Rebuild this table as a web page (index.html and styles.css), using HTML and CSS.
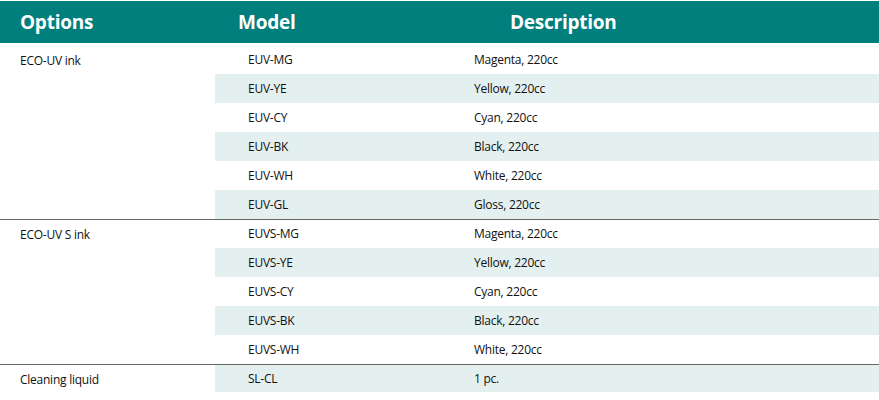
FILE: index.html
```html
<!DOCTYPE html>
<html lang="en">
<head>
<meta charset="utf-8">
<title>Options</title>
<link rel="stylesheet" href="styles.css">
</head>
<body>
<div class="table">
  <div class="head">
    <div class="h h-opt">Options</div>
    <div class="h h-model">Model</div>
    <div class="h h-desc">Description</div>
  </div>
  <div class="group">
    <div class="opt">ECO-UV ink</div>
    <div class="rows">
      <div class="row"><div class="model">EUV-MG</div><div class="desc">Magenta, 220cc</div></div>
      <div class="row"><div class="model">EUV-YE</div><div class="desc">Yellow, 220cc</div></div>
      <div class="row"><div class="model">EUV-CY</div><div class="desc">Cyan, 220cc</div></div>
      <div class="row"><div class="model">EUV-BK</div><div class="desc">Black, 220cc</div></div>
      <div class="row"><div class="model">EUV-WH</div><div class="desc">White, 220cc</div></div>
      <div class="row"><div class="model">EUV-GL</div><div class="desc">Gloss, 220cc</div></div>
    </div>
  </div>
  <div class="group ruled">
    <div class="opt">ECO-UV S ink</div>
    <div class="rows">
      <div class="row"><div class="model">EUVS-MG</div><div class="desc">Magenta, 220cc</div></div>
      <div class="row"><div class="model">EUVS-YE</div><div class="desc">Yellow, 220cc</div></div>
      <div class="row"><div class="model">EUVS-CY</div><div class="desc">Cyan, 220cc</div></div>
      <div class="row"><div class="model">EUVS-BK</div><div class="desc">Black, 220cc</div></div>
      <div class="row"><div class="model">EUVS-WH</div><div class="desc">White, 220cc</div></div>
    </div>
  </div>
  <div class="group ruled">
    <div class="opt">Cleaning liquid</div>
    <div class="rows alt-first">
      <div class="row last"><div class="model">SL-CL</div><div class="desc">1 pc.</div></div>
    </div>
  </div>
</div>
</body>
</html>
```
FILE: styles.css
```css
html, body {
  margin: 0;
  padding: 0;
  background: #ffffff;
}
body {
  padding-top: 1px;
  font-family: "Open Sans", "Noto Sans", sans-serif;
  color: #111111;
}
.table {
  width: 879px;
}
.head {
  height: 42px;
  background: #007f7d;
  display: grid;
  grid-template-columns: 215px 230px 1fr;
  align-items: center;
  margin-bottom: 3px;
}
.h {
  color: #ffffff;
  font-weight: 700;
  font-size: 19px;
  letter-spacing: -0.25px;
}
.h-opt { padding-left: 20px; }
.h-model { padding-left: 23px; }
.h-desc { padding-left: 65px; }
.group {
  display: grid;
  grid-template-columns: 215px 1fr;
}
.group.ruled {
  border-top: 1px solid #666666;
}
.opt {
  padding-left: 20px;
  height: 29px;
  line-height: 29px;
  font-size: 12px;
  letter-spacing: -0.25px;
}
.row {
  display: grid;
  grid-template-columns: 230px 1fr;
  height: 29px;
  line-height: 29px;
  font-size: 12px;
  letter-spacing: -0.25px;
}
.rows .row:first-child {
  height: 28px;
  line-height: 28px;
}
.rows.alt-first .row.last {
  height: 27px;
  line-height: 27px;
}
.rows .row:nth-child(even) {
  background: #e4f0f0;
}
.rows.alt-first .row:nth-child(odd) {
  background: #e4f0f0;
}
.model { padding-left: 33px; }
.desc { padding-left: 29px; }
```
